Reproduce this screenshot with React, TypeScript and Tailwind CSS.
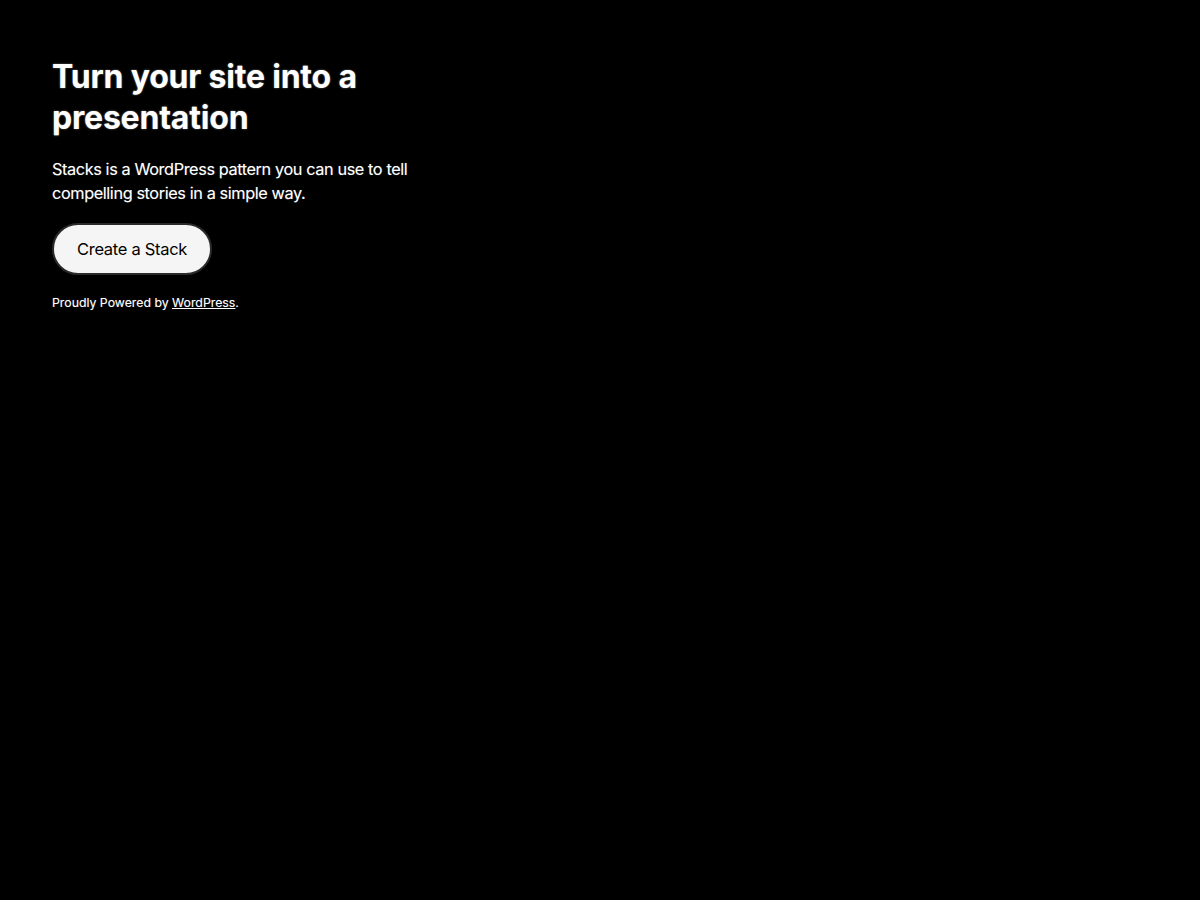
export default function App() {
  return (
    <div className="min-h-[900px] bg-black px-[52px] pt-[56px] font-['Inter','Liberation_Sans',sans-serif] text-white">
      <div className="max-w-[380px]">
        <h1 className="text-[32px] font-bold leading-[41px] tracking-[-0.2px] [text-shadow:0_0_2px_#777]">
          Turn your site into a presentation
        </h1>
        <p className="mt-[19px] text-[16.3px] leading-[24px] tracking-[-0.4px] [text-shadow:0_0_1px_#555]">
          Stacks is a WordPress pattern you can use to tell compelling stories in a simple way.
        </p>
      </div>
      <button className="mt-[18px] h-[52px] rounded-full border-2 border-[#2a2a2a] bg-[#f5f5f5] px-[23px] text-[16.5px] tracking-[-0.3px] text-black">
        Create a Stack
      </button>
      <p className="mt-[19px] text-[12.3px] leading-[18px] [text-shadow:0_0_1px_#555]">
        Proudly Powered by{' '}
        <a href="#" className="underline">
          WordPress
        </a>
        .
      </p>
    </div>
  );
}
